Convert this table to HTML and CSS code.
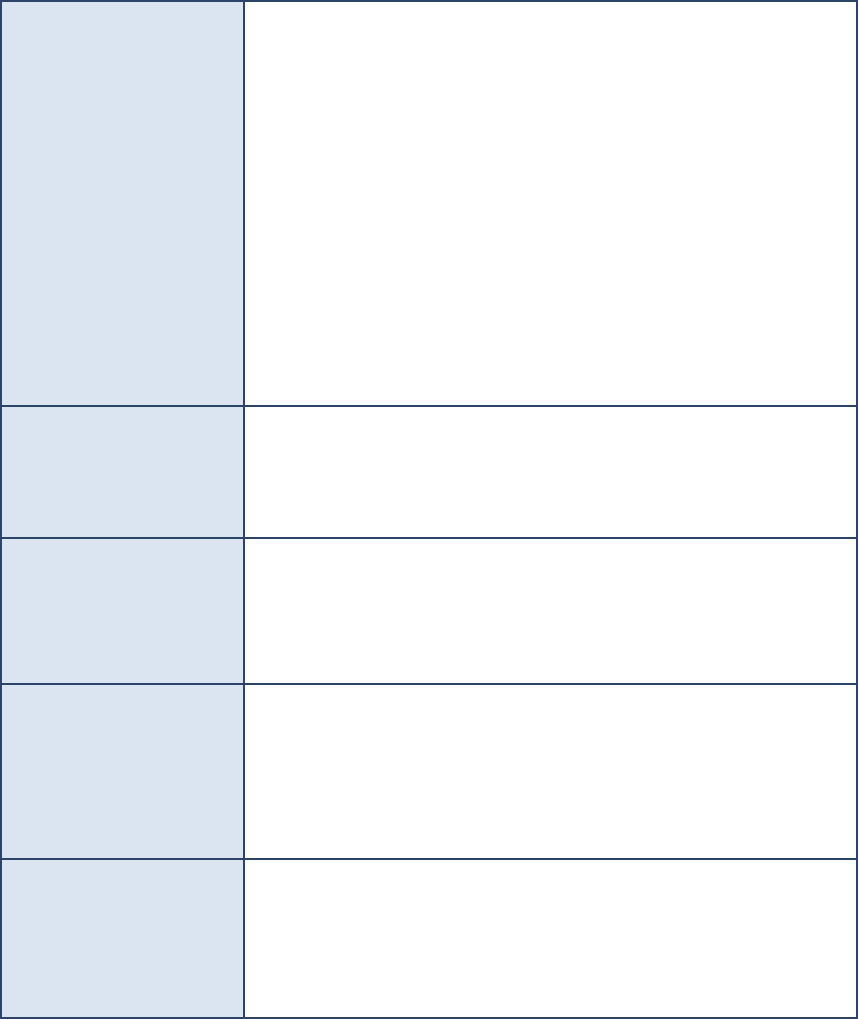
FILE: index.html
```html
<!DOCTYPE html>
<html lang="en">
<head>
    <meta charset="UTF-8">
    <meta name="viewport" content="width=device-width, initial-scale=1.0">
    <link rel="stylesheet" href="styles.css">
</head>
<body>
    <!-- 양식 표 -->
    <table class="form-table">
        <tr class="row-1">
            <td class="label-cell"></td>
            <td class="value-cell"></td>
        </tr>
        <tr class="row-2">
            <td class="label-cell"></td>
            <td class="value-cell"></td>
        </tr>
        <tr class="row-3">
            <td class="label-cell"></td>
            <td class="value-cell"></td>
        </tr>
        <tr class="row-4">
            <td class="label-cell"></td>
            <td class="value-cell"></td>
        </tr>
        <tr class="row-5">
            <td class="label-cell"></td>
            <td class="value-cell"></td>
        </tr>
    </table>
</body>
</html>
```

FILE: styles.css
```css
/* 공통 스타일 */
body {
    font-family: "Liberation Sans", Arial, sans-serif;
    margin: 0;
    padding: 0;
    background-color: #ffffff;
}

.form-table {
    border-collapse: collapse;
    width: 858px;
    table-layout: fixed;
}

.form-table td {
    border: 2px solid #2b4468;
    padding: 0;
}

/* 왼쪽 제목 칸 */
.label-cell {
    width: 241px;
    background-color: #dbe5f1;
}

.value-cell {
    background-color: #ffffff;
}

/* 행 높이 */
.row-1 { height: 405px; }
.row-2 { height: 132px; }
.row-3 { height: 146px; }
.row-4 { height: 175px; }
.row-5 { height: 159px; }
```
